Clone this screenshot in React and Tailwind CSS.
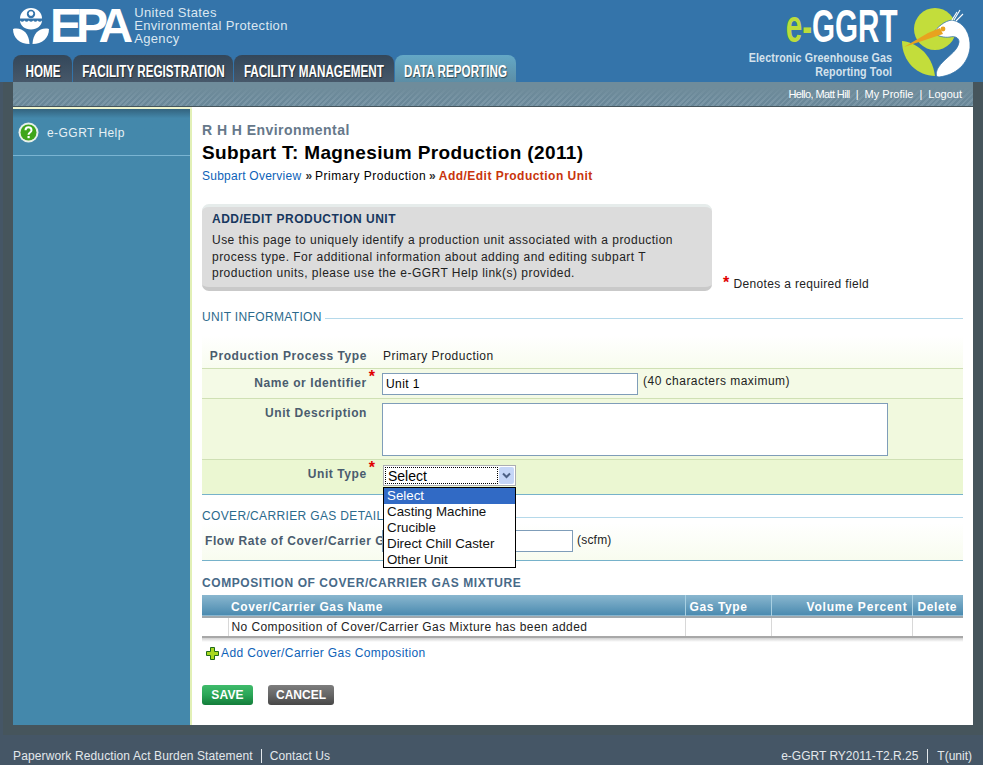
import React from "react";

function EpaMark() {
  return (
    <svg width="36" height="36" viewBox="0 0 36 36" className="shrink-0">
      <path d="M7 10.500C7 4.500 12 0 18 0s11 4.500 11 10.500z" fill="#fff" />
      <circle cx="18" cy="6" r="4.200" fill="#3474aa" />
      <circle cx="18" cy="5.600" r="2.300" fill="#fff" />
      <path d="M7 12.500c1.500 1.600 3 1.600 4.400 0 1.500 1.600 3 1.600 4.400 0 1.500 1.600 3 1.600 4.400 0 1.500 1.600 3 1.600 4.400 0 1.500 1.600 3 1.600 4.400 0C29 17.500 24 21.500 18 21.500S7 17.500 7 12.500z" fill="#fff" />
      <path d="M0 21c8-2 16 3 16.500 15C7 36 0 30 0 21z" fill="#fff" />
      <path d="M36 21c-8-2-16 3-16.500 15C29 36 36 30 36 21z" fill="#fff" />
    </svg>
  );
}

function Heron() {
  return (
    <svg width="93" height="82" viewBox="0 0 93 82" className="shrink-0">
      <circle cx="45" cy="29" r="21" fill="#c3dd3b" />
      <path d="M12 41C24 42 42 52 45 76 28 76 12 62 12 41z" fill="#c3dd3b" />
      <path d="M43 33C48 27 54 21 62 20 74 22 81 34 80 48 78 64 66 75 49 77 45 77 46 72 48 68 54 58 68 52 69 42 69 37 64 36 60 37 54 38 48 36 43 33z" fill="#fff" stroke="#3474aa" strokeWidth="0.8" />
      <path d="M14 47 38 33 50 28 53 34 44 37z" fill="#e8a21f" />
      <circle cx="53" cy="29" r="2.400" fill="#e8a21f" />
      <path d="M62 20 67 12M64 20 70 10M66 21 73 14" stroke="#fff" strokeWidth="1.100" fill="none" />
    </svg>
  );
}

function Tab({ w, scale, active, children }) {
  return (
    <div
      className={
        "h-[27px] rounded-t-[8px] flex items-center justify-center overflow-hidden pt-[7px] " +
        (active
          ? "bg-gradient-to-b from-[#64a8c6] to-[#5c8ea6] "
          : "bg-gradient-to-b from-[#33475a] to-[#47586a] ")
      }
      style={{ width: w }}
    >
      <span
        className="font-bold text-[16px] leading-[18px] text-white whitespace-nowrap [text-shadow:1px_1px_1px_rgba(0,0,0,0.5)]"
        style={{ transform: `scaleX(${scale})` }}
      >
        {children}
      </span>
    </div>
  );
}

function Req() {
  return <span className="text-[#e00000] font-bold text-[16px] leading-[12px] ml-[2px] -mr-[8px] -mt-[3px]">*</span>;
}

function SectionHead({ children }) {
  return (
    <div className="flex items-end gap-[3px] h-[14px]">
      <span className="text-[12px] leading-[14px] text-[#2b6a8c] tracking-[0.35px] whitespace-nowrap">{children}</span>
      <span className="flex-1 h-px bg-[#b5d9ea] mb-[5px]" />
    </div>
  );
}

function Label({ children, req, className = "" }) {
  return (
    <div className={"w-[165px] flex justify-end shrink-0 " + className}>
      <span className="font-bold text-[12px] tracking-[0.58px] text-[#4a5c6e] whitespace-nowrap">{children}</span>
      {req && <Req />}
    </div>
  );
}

export default function App() {
  return (
    <div className="w-[983px] h-[765px] bg-[#455666] flex flex-col overflow-hidden font-['Liberation_Sans',Arial,sans-serif] text-[12px] text-black">
      <header className="h-[82px] bg-[#3474aa] flex justify-between shrink-0">
        <div className="pl-[13px] flex flex-col">
          <div className="h-[55px] pt-[8px] flex items-start">
            <EpaMark />
            <span className="ml-[1px] mt-[-8px] font-bold text-white text-[48px] leading-[52px] tracking-[-6px]">EPA</span>
            <div className="ml-[7px] -mt-[2px] text-[13px] leading-[13px] tracking-[0.35px] text-[#dbe7f1]">
              <div>United States</div>
              <div>Environmental Protection</div>
              <div>Agency</div>
            </div>
          </div>
          <div className="flex gap-[1px]">
            <Tab w={59} scale={0.73}>HOME</Tab>
            <Tab w={160} scale={0.73}>FACILITY REGISTRATION</Tab>
            <Tab w={160} scale={0.73}>FACILITY MANAGEMENT</Tab>
            <Tab w={121} scale={0.73} active>DATA REPORTING</Tab>
          </div>
        </div>
        <div className="flex">
          <div className="flex flex-col items-end mr-[-2px]">
            <div className="font-bold text-[47px] leading-[52px] whitespace-nowrap origin-right scale-x-[0.63] -mr-[6px]">
              <span className="text-[#bcdc3c]">e-</span>
              <span className="text-white">GGRT</span>
            </div>
            <div className="-mt-px font-bold text-[12px] leading-[14px] tracking-[0.15px] text-[#d4e2ec] text-right origin-right scale-x-[0.89]">
              Electronic Greenhouse Gas
              <br />
              Reporting Tool
            </div>
          </div>
          <Heron />
        </div>
      </header>

      <div className="flex-1 ml-[3px] bg-[#46555c] flex flex-col pl-[10px] pr-[10px]">
        <div className="h-[24px] shrink-0 bg-[#6f8c9b] bg-[linear-gradient(#6f8c9b_25%,transparent_80%),repeating-linear-gradient(135deg,#6a8899_0px,#6a8899_2px,#7a96a6_2px,#7a96a6_4px)] flex items-center justify-end pr-[11px] text-[11px] text-white gap-[6px]">
          <span className="tracking-[-0.6px]">Hello, Matt Hill</span>
          <span>|</span>
          <span>My Profile</span>
          <span>|</span>
          <span>Logout</span>
        </div>
        <div className="h-[618px] mt-[1px] flex bg-white shrink-0">
          <aside className="w-[179px] shrink-0 border-r-2 border-[#e2f0b6] bg-[#4488ab] flex flex-col">
            <div className="h-[2px] bg-[#eef5cf] mr-[-2px]" />
            <div className="h-[47px] border-b border-[#7ab4d2] flex items-center pl-[5px] pt-[1px] bg-gradient-to-b from-[#33637e] from-0% to-[#4488ab] to-20%">
              <svg width="21" height="21" viewBox="0 0 21 21" className="shrink-0">
                <circle cx="10.500" cy="10.500" r="10" fill="#e8f0ea" />
                <circle cx="10.500" cy="10.500" r="8" fill="#3fa51a" />
                <path d="M7.500 8.200c0-4 6-4 6 0 0 2.300-3 2.300-3 4.500" fill="none" stroke="#fff" strokeWidth="2" />
                <rect x="9.500" y="14" width="2.200" height="2.200" fill="#fff" />
              </svg>
              <span className="ml-[8px] text-[12px] tracking-[0.45px] text-[#e6f0f5]">e-GGRT Help</span>
            </div>
          </aside>

          <main className="flex-1 pl-[10px] pr-[10px] min-w-0">
            <div className="pt-[15px] font-bold text-[14px] leading-[16px] tracking-[0.45px] text-[#66788a]">R H H Environmental</div>
            <h1 className="mt-[3px] font-bold text-[19px] leading-[24px] tracking-[0.37px] text-black">Subpart T: Magnesium Production (2011)</h1>
            <div className="mt-[3px] text-[12px] leading-[16px] whitespace-nowrap flex">
              <span className="text-[#0d62b8] tracking-[0.25px]">Subpart Overview</span>
              <span className="font-bold text-[#333] ml-[4px] mr-[3px]">»</span>
              <span className="tracking-[0.5px]">Primary Production</span>
              <span className="font-bold text-[#333] mx-[3px]">»</span>
              <span className="font-bold text-[#c8340c] tracking-[0.47px]">Add/Edit Production Unit</span>
            </div>

            <div className="mt-[20px] flex items-end">
              <section className="w-[510px] h-[87px] rounded-[7px] bg-[#dcdcdc] border-t-[3px] border-b-[4px] border-t-[#e6eceb] border-b-[#c9c9c9] pl-[10px] pt-[5px]">
                <div className="font-bold text-[12px] leading-[14px] text-[#17375e] tracking-[0.5px]">ADD/EDIT PRODUCTION UNIT</div>
                <p className="mt-[6px] text-[12px] leading-[16.500px] tracking-[0.47px] text-[#222] whitespace-nowrap">
                  Use this page to uniquely identify a production unit associated with a production
                  <br />
                  process type. For additional information about adding and editing subpart T
                  <br />
                  production units, please use the e-GGRT Help link(s) provided.
                </p>
              </section>
              <div className="ml-[11px] flex items-start text-[12px] leading-[14px] tracking-[0.33px] text-[#222]">
                <span className="text-[#e00000] font-bold text-[16px] leading-[12px] mr-[4px]">*</span>
                <span>Denotes a required field</span>
              </div>
            </div>

            <div className="mt-[19px]">
              <SectionHead>UNIT INFORMATION</SectionHead>
            </div>

            <div className="relative mt-[12px]">
              <div className="h-[33px] flex items-end pb-[3px] bg-gradient-to-b from-white to-[#f8fcef] border-b border-[#cfe0b4]">
                <Label>Production Process Type</Label>
                <span className="ml-[16px] text-[#222] tracking-[0.48px]">Primary Production</span>
              </div>
              <div className="h-[30px] flex items-center bg-[#f4fae6] border-b border-[#cfe0b4]">
                <Label req className="mb-[2px]">Name or Identifier</Label>
                <input readOnly value="Unit 1" className="ml-[15px] w-[256px] h-[22px] border border-[#7f9db9] bg-white px-[3px] text-[12px] tracking-[0.4px] outline-none" />
                <span className="ml-[5px] text-[#222] -mt-[5px] tracking-[0.48px]">(40 characters maximum)</span>
              </div>
              <div className="h-[61px] flex items-start pt-[4px] bg-[#f1f9de] border-b border-[#cfe0b4]">
                <Label className="mt-[1px]">Unit Description</Label>
                <textarea readOnly className="ml-[15px] w-[506px] h-[53px] border border-[#7f9db9] bg-white resize-none outline-none" />
              </div>
              <div className="h-[35px] flex items-start pt-[5px] bg-[#ebf7d2] border-b border-[#76b2ca]">
                <Label req>Unit Type</Label>
                <div className="ml-[16px] w-[133px] h-[21px] border border-[#abadb3] bg-white flex items-center p-[1px]">
                  <span className="flex-1 h-full border border-dotted border-black text-[14px] leading-[17px] pl-[2px]">Select</span>
                  <span className="w-[15px] h-full ml-[1px] bg-[#c5d6f7] rounded-[2px] flex items-center justify-center">
                    <svg width="9" height="7" viewBox="0 0 9 7">
                      <path d="M1 1.500 4.500 5 8 1.500" fill="none" stroke="#4d6185" strokeWidth="2" />
                    </svg>
                  </span>
                </div>
              </div>

              <div className="absolute left-[181px] top-[151px] w-[133px] h-[81px] z-10 bg-white border border-black text-[13.330px] leading-[16px] text-[#111]">
                <div className="bg-[#316ac5] text-white pl-[3px]">Select</div>
                <div className="pl-[3px]">Casting Machine</div>
                <div className="pl-[3px]">Crucible</div>
                <div className="pl-[3px]">Direct Chill Caster</div>
                <div className="pl-[3px]">Other Unit</div>
              </div>
            </div>

            <div className="mt-[14px]">
              <SectionHead>COVER/CARRIER GAS DETAILS</SectionHead>
            </div>
            <div className="h-[38px] flex items-center pb-[2px] bg-gradient-to-b from-white to-[#f8fcef] border-b border-[#76b2ca]">
              <Label className="!justify-start pl-[3px]">Flow Rate of Cover/Carrier Gas</Label>
              <input readOnly className="ml-[15px] w-[191px] h-[22px] border border-[#7f9db9] bg-white outline-none" />
              <span className="ml-[4px] text-[#222] tracking-[0.2px] -mt-[2px]">(scfm)</span>
            </div>

            <div className="mt-[15px] font-bold text-[12px] leading-[14px] tracking-[0.58px] text-[#486a88]">COMPOSITION OF COVER/CARRIER GAS MIXTURE</div>

            <table className="mt-[5px] w-[761px] table-fixed border-collapse text-[12px]">
              <thead>
                <tr className="h-[22px] bg-gradient-to-b from-[#8ab7cf] to-[#4a8bb0] text-white font-bold tracking-[0.6px] border-b-2 border-[#a0a8ad] [&>th]:pt-[2px]">
                  <th className="w-[26px]" />
                  <th className="w-[457px] text-left pl-[3px] font-bold">Cover/Carrier Gas Name</th>
                  <th className="w-[86px] text-left pl-[4px] font-bold border-l border-[#a8d0e2]">Gas Type</th>
                  <th className="w-[141px] text-right pr-[4px] font-bold border-l border-[#a8d0e2] tracking-[0.8px]">Volume Percent</th>
                  <th className="text-left pl-[5px] font-bold border-l border-[#a8d0e2]">Delete</th>
                </tr>
              </thead>
              <tbody>
                <tr className="h-[20px] border-b-2 border-[#a8a8a8]">
                  <td className="border-r border-[#d8d8d8]" />
                  <td className="pl-[3px] text-[#222] tracking-[0.42px] whitespace-nowrap">No Composition of Cover/Carrier Gas Mixture has been added</td>
                  <td className="border-l border-[#d8d8d8]" />
                  <td className="border-l border-[#d8d8d8]" />
                  <td className="border-l border-[#d8d8d8]" />
                </tr>
              </tbody>
            </table>
            <div className="h-[4px] bg-gradient-to-b from-[#d0d0d0] to-white" />

            <div className="mt-[3px] ml-[4px] flex items-center h-[16px]">
              <svg width="13" height="13" viewBox="0 0 13 13" className="shrink-0">
                <path d="M4.500.5h4v4h4v4h-4v4h-4v-4h-4v-4h4z" fill="#a8d820" stroke="#1f6a1a" />
              </svg>
              <span className="ml-[2px] text-[#0d62b8] tracking-[0.38px]">Add Cover/Carrier Gas Composition</span>
            </div>

            <div className="mt-[24px] flex gap-[15px]">
              <button className="w-[51px] h-[20px] rounded-[3px] bg-gradient-to-b from-[#3fbb6b] from-0% via-[#2aa657] via-50% to-[#137d3a] text-white font-bold text-[12px] tracking-[0.2px]">SAVE</button>
              <button className="w-[66px] h-[20px] rounded-[3px] bg-gradient-to-b from-[#7d7d7d] from-0% via-[#666] via-50% to-[#474747] text-white font-bold text-[12px]">CANCEL</button>
            </div>
          </main>
        </div>
      </div>

      <footer className="h-[30px] shrink-0 flex items-center justify-between pl-[13px] pr-[11px] pt-[11px] text-[12px] text-[#e3e8ec]">
        <div className="flex items-center gap-[8px]">
          <span className="tracking-[0.125px]">Paperwork Reduction Act Burden Statement</span>
          <span className="w-px h-[14px] bg-[#e3e8ec]" />
          <span className="tracking-[0.1px]">Contact Us</span>
        </div>
        <div className="flex items-center gap-[9px]">
          <span>e-GGRT RY2011-T2.R.25</span>
          <span className="w-px h-[14px] bg-[#e3e8ec]" />
          <span>T(unit)</span>
        </div>
      </footer>
    </div>
  );
}
